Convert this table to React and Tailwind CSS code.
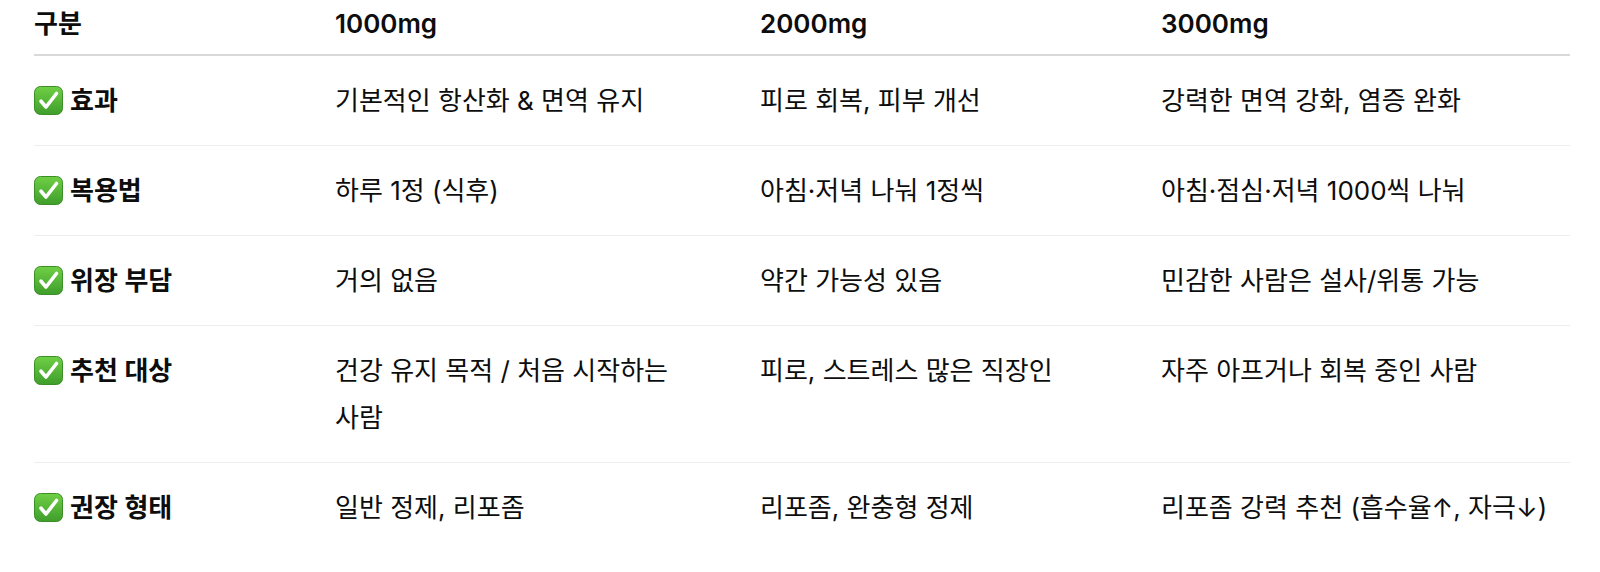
const rows = [
  {
    label: "효과",
    cells: ["기본적인 항산화 & 면역 유지", "피로 회복, 피부 개선", "강력한 면역 강화, 염증 완화"],
  },
  {
    label: "복용법",
    cells: ["하루 1정 (식후)", "아침·저녁 나눠 1정씩", "아침·점심·저녁 1000씩 나눠"],
  },
  {
    label: "위장 부담",
    cells: ["거의 없음", "약간 가능성 있음", "민감한 사람은 설사/위통 가능"],
  },
  {
    label: "추천 대상",
    cells: ["건강 유지 목적 / 처음 시작하는 사람", "피로, 스트레스 많은 직장인", "자주 아프거나 회복 중인 사람"],
  },
  {
    label: "권장 형태",
    cells: ["일반 정제, 리포좀", "리포좀, 완충형 정제", "리포좀 강력 추천 (흡수율↑, 자극↓)"],
  },
];

function CheckEmoji() {
  return (
    <svg width="29" height="29" viewBox="0 0 29 29" className="shrink-0">
      <defs>
        <linearGradient id="chk" x1="0" y1="0" x2="0" y2="1">
          <stop offset="0" stopColor="#6fd045" />
          <stop offset="1" stopColor="#3f9d2b" />
        </linearGradient>
      </defs>
      <rect x="0.5" y="0.5" width="28" height="28" rx="6" fill="url(#chk)" stroke="#3a8f27" strokeWidth="1" />
      <path
        d="M7 15.2 L12 21 L22.5 7.5"
        fill="none"
        stroke="#ffffff"
        strokeWidth="3.6"
        strokeLinecap="round"
        strokeLinejoin="round"
      />
    </svg>
  );
}

export default function App() {
  return (
    <div className="bg-white min-h-[572px] pl-[34px] text-[#0d0d0d] text-[26px] leading-[47px] break-keep font-['Inter','Noto_Sans_CJK_KR',sans-serif]">
      <table className="table-fixed w-[1536px] border-collapse text-left">
        <colgroup>
          <col className="w-[301px]" />
          <col className="w-[425px]" />
          <col className="w-[401px]" />
          <col className="w-[409px]" />
        </colgroup>
        <thead>
          <tr className="border-b-2 border-[#d9d9d9]">
            <th className="pb-[7px] pr-4 font-semibold">구분</th>
            <th className="pb-[7px] pr-4 font-semibold">1000mg</th>
            <th className="pb-[7px] pr-4 font-semibold">2000mg</th>
            <th className="pb-[7px] font-semibold">3000mg</th>
          </tr>
        </thead>
        <tbody>
          {rows.map((r, i) => (
            <tr key={r.label} className={i < rows.length - 1 ? "border-b-[1.5px] border-[#ededed]" : ""}>
              <td className="py-[21px] pr-4 align-top font-semibold">
                <div className="flex items-center gap-[7px]">
                  <CheckEmoji />
                  <span>{r.label}</span>
                </div>
              </td>
              <td className="py-[21px] pr-[60px] align-top">{r.cells[0]}</td>
              <td className="py-[21px] pr-4 align-top">{r.cells[1]}</td>
              <td className="py-[21px] align-top whitespace-nowrap">{r.cells[2]}</td>
            </tr>
          ))}
        </tbody>
      </table>
    </div>
  );
}
